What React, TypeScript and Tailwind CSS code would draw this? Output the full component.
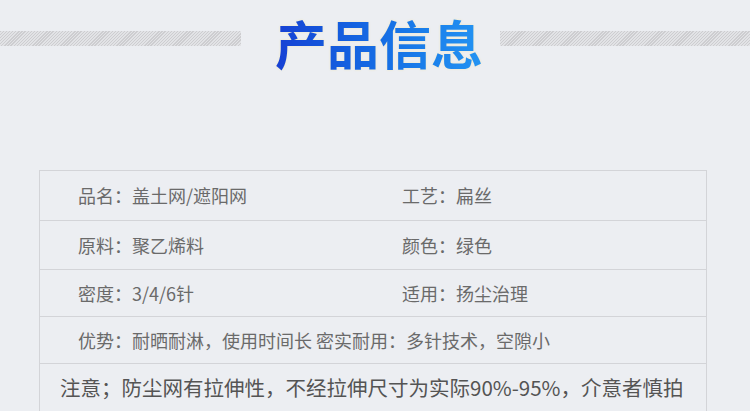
import React from 'react';

const rows: [string, string][] = [
  ['品名：盖土网/遮阳网', '工艺：扁丝'],
  ['原料：聚乙烯料', '颜色：绿色'],
  ['密度：3/4/6针', '适用：扬尘治理'],
];

function Hatch({ className }: { className: string }) {
  return (
    <div
      className={`h-[15px] bg-[repeating-linear-gradient(135deg,#cdcdd0_0px,#cdcdd0_1px,#e2e3e6_1px,#e2e3e6_2.2px)] ${className}`}
    />
  );
}

export default function App() {
  return (
    <div className="w-[750px] min-h-[411px] overflow-hidden bg-[#eceef2] font-['Noto_Sans_CJK_SC',sans-serif]">
      <div className="flex items-start pt-[14px] h-[170px]">
        <Hatch className="w-[241px] mt-[17px]" />
        <h1 className="ml-[34px] text-[52px] leading-[58px] font-bold bg-gradient-to-r from-[#1740d4] to-[#2494f3] bg-clip-text text-transparent drop-shadow-[0_0_1px_#f3e9bd]">
          产品信息
        </h1>
        <Hatch className="flex-1 ml-[17px] mt-[17px]" />
      </div>

      <div className="ml-[39px] w-[668px] border-x border-b border-[#d3d4d8] text-[#6a6a6a]">
        {rows.map(([a, b], i) => (
          <div
            key={a}
            className={`flex items-center border-t border-[#d3d4d8] text-[18px] ${i === 0 ? 'h-[50px]' : i === 1 ? 'h-[49px]' : 'h-[47px]'}`}
          >
            <div className="w-[324px] pl-[38px]">{a}</div>
            <div className="pl-[38px]">{b}</div>
          </div>
        ))}
        <div className="flex items-center h-[47px] border-t border-[#d3d4d8] pl-[38px] text-[18px]">
          优势：耐晒耐淋，使用时间长 密实耐用：多针技术，空隙小
        </div>
        <div className="flex items-center h-[48px] border-t border-[#d3d4d8] pl-[20px] text-[20.5px] text-[#545454]">
          注意；防尘网有拉伸性，不经拉伸尺寸为实际90%-95%，介意者慎拍
        </div>
      </div>
    </div>
  );
}
